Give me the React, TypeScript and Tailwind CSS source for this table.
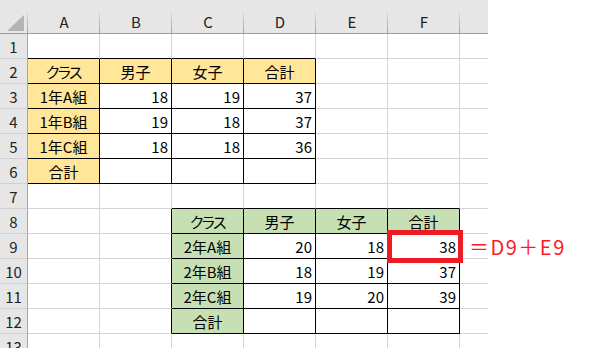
import React from "react";

type Fill = "yellow" | "green" | undefined;
type Cell = { v?: string; fill?: Fill; align?: "c" | "r" };

const COLS = ["A", "B", "C", "D", "E", "F"];
const ROWS = 13;

// Sheet contents keyed by "row:col" (row 1-based, col 0 = A)
const data: Record<string, Cell> = {};
const put = (r: number, c: number, v: string | undefined, fill: Fill, align: "c" | "r" = "c") => {
  data[`${r}:${c}`] = { v, fill, align };
};

// Year 1 table (A2:D6)
["クラス", "男子", "女子", "合計"].forEach((h, i) => put(2, i, h, "yellow"));
[
  ["1年A組", "18", "19", "37"],
  ["1年B組", "19", "18", "37"],
  ["1年C組", "18", "18", "36"],
].forEach((row, j) => {
  put(3 + j, 0, row[0], "yellow");
  for (let k = 1; k < 4; k++) put(3 + j, k, row[k], undefined, "r");
});
put(6, 0, "合計", "yellow");

// Year 2 table (C8:F12)
["クラス", "男子", "女子", "合計"].forEach((h, i) => put(8, 2 + i, h, "green"));
[
  ["2年A組", "20", "18", "38"],
  ["2年B組", "18", "19", "37"],
  ["2年C組", "19", "20", "39"],
].forEach((row, j) => {
  put(9 + j, 2, row[0], "green");
  for (let k = 1; k < 4; k++) put(9 + j, 2 + k, row[k], undefined, "r");
});
put(12, 2, "合計", "green");

const inT1 = (r: number, c: number) => r >= 2 && r <= 6 && c >= 0 && c <= 3;
const inT2 = (r: number, c: number) => r >= 8 && r <= 12 && c >= 2 && c <= 5;

function rightBlack(r: number, c: number) {
  return inT1(r, c) || inT2(r, c) || inT2(r, c + 1);
}
function bottomBlack(r: number, c: number) {
  return inT1(r, c) || inT2(r, c) || inT1(r + 1, c) || inT2(r + 1, c);
}

function HeaderSep() {
  return (
    <span className="absolute right-0 top-[10px] bottom-0 w-px bg-gradient-to-b from-[#e2e2e2] to-[#a3a3a3]" />
  );
}

function BodyCell({ r, c }: { r: number; c: number }) {
  const cell = data[`${r}:${c}`];
  const fill =
    cell?.fill === "yellow" ? "bg-[#ffe699]" : cell?.fill === "green" ? "bg-[#c6e0b4]" : "bg-white";
  const br = rightBlack(r, c) ? "border-r-black" : "border-r-[#d4d4d4]";
  const bb = bottomBlack(r, c) ? "border-b-black" : "border-b-[#d4d4d4]";
  const align = cell?.align === "r" ? "justify-end pr-[3px]" : "justify-center";
  const kana = cell?.v === "クラス" ? "tracking-[-1.5px]" : "";
  return (
    <div
      className={`w-[72px] h-full shrink-0 flex items-center border-r border-b ${br} ${bb} ${fill} ${align}`}
    >
      {cell?.v ? <span className={`leading-none ${kana}`}>{cell.v}</span> : null}
    </div>
  );
}

export default function App() {
  return (
    <div
      className="w-[589px] h-[348px] overflow-hidden bg-white text-[15px] text-black [font-feature-settings:'palt'] relative"
      style={{ fontFamily: '"Noto Sans CJK JP", "Noto Sans", sans-serif' }}
    >
      <div className="w-[488px] flex flex-col">
        {/* column header band */}
        <div className="flex h-[34px] bg-[#e6e6e6] border-b border-b-[#9d9d9d]">
          <div className="relative w-[28px] shrink-0 h-full">
            <svg className="absolute left-[7px] top-[15px]" width="17" height="16" viewBox="0 0 17 16">
              <polygon points="17,0 17,16 0,16" fill="#b4b4b4" />
            </svg>
            <HeaderSep />
          </div>
          {COLS.map((h) => (
            <div
              key={h}
              className="relative w-[72px] shrink-0 h-full flex items-center justify-center pt-[9px] text-[#222]"
            >
              <span className="leading-none">{h}</span>
              <HeaderSep />
            </div>
          ))}
          <div className="flex-1" />
        </div>

        {Array.from({ length: ROWS }, (_, i) => i + 1).map((r) => (
          <div key={r} className="flex h-[25px]">
            <div className="w-[28px] shrink-0 h-full flex items-center justify-center bg-[#e6e6e6] border-r border-b border-r-[#a6a6a6] border-b-[#cfcfcf] text-[#222]">
              <span className="leading-none">{r}</span>
            </div>
            {COLS.map((_, c) => (
              <BodyCell key={c} r={r} c={c} />
            ))}
            <div className="flex-1 h-full border-b border-b-[#d4d4d4]" />
          </div>
        ))}
      </div>

      {/* highlighted cell F9 */}
      <div className="absolute left-[387px] top-[230px] w-[76px] h-[33px] border-[5px] border-[#ed1c24]" />

      {/* formula note */}
      <div className="absolute left-[469px] top-[234px] h-[25px] flex items-center text-[20px] tracking-[1.5px] leading-none text-[#ff1a22]">
        ＝D9＋E9
      </div>
    </div>
  );
}
